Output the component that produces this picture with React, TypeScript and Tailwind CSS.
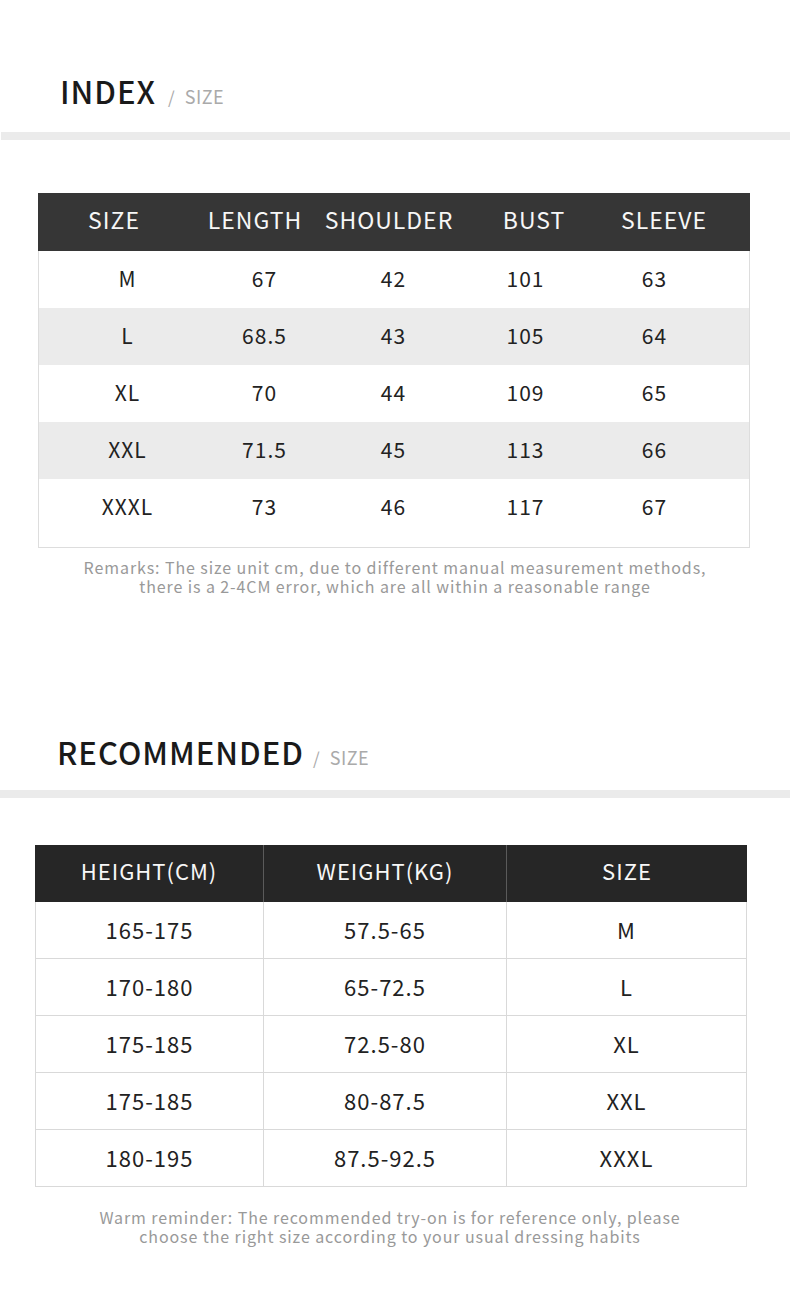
import React from 'react';

const FONT = "font-['Noto_Sans_CJK_SC','Noto_Sans',sans-serif]";

const indexRows = [
  ['M', '67', '42', '101', '63'],
  ['L', '68.5', '43', '105', '64'],
  ['XL', '70', '44', '109', '65'],
  ['XXL', '71.5', '45', '113', '66'],
  ['XXXL', '73', '46', '117', '67'],
];

const recRows = [
  ['165-175', '57.5-65', 'M'],
  ['170-180', '65-72.5', 'L'],
  ['175-185', '72.5-80', 'XL'],
  ['175-185', '80-87.5', 'XXL'],
  ['180-195', '87.5-92.5', 'XXXL'],
];

const SectionTitle: React.FC<{ title: string; className?: string; gap?: string }> = ({ title, className, gap }) => (
  <div className={`flex items-baseline ${className ?? ''}`}>
    <span className="text-[31px] leading-none font-medium tracking-[1px] text-[#1a1a1a]">{title}</span>
    <span className={`${gap ?? 'ml-[12px]'} text-[17px] leading-none text-[#aaaaaa]`}>/</span>
    <span className="ml-[10px] text-[18px] leading-none tracking-[0.5px] text-[#aaaaaa]">SIZE</span>
  </div>
);

const App: React.FC = () => {
  return (
    <div className={`w-[790px] min-h-[1304px] bg-white ${FONT}`}>
      {/* index section */}
      <div className="pt-[75px]">
        <SectionTitle title="INDEX" className="pl-[60px]" />
        <div className="mt-[26px] h-[8px] bg-[#ebebeb] ml-[1px]" />
      </div>

      <div className="ml-[38px] mt-[53px] w-[712px]">
        <div className="grid grid-cols-[152px_130px_138px_152px_108px_1fr] h-[58px] pb-[5px] items-center bg-[#363636] text-[#f7f7f7] text-[23px] tracking-[1px]">
          {['SIZE', 'LENGTH', 'SHOULDER', 'BUST', 'SLEEVE'].map((h) => (
            <div key={h} className="text-center whitespace-nowrap">{h}</div>
          ))}
          <div />
        </div>
        <div className="border-x border-b border-[#dddddd]">
          {indexRows.map((r, i) => (
            <div
              key={r[0]}
              className={`grid grid-cols-[178px_96px_162px_102px_156px_1fr] items-center text-[21px] tracking-[1px] text-[#222222] pb-[2px] ${
                i % 2 === 1 ? 'bg-[#ebebeb]' : 'bg-white'
              } ${i === indexRows.length - 1 ? 'h-[57px] mb-[11px]' : 'h-[57px]'}`}
            >
              {r.map((c, j) => (
                <div key={j} className="text-center -ml-px">{c}</div>
              ))}
              <div />
            </div>
          ))}
        </div>
      </div>

      <div className="mt-[10px] text-center text-[16px] leading-[19px] tracking-[0.9px] text-[#999999]">
        <div>Remarks: The size unit cm, due to different manual measurement methods,</div>
        <div>there is a 2-4CM error, which are all within a reasonable range</div>
      </div>

      {/* recommended section */}
      <div className="pt-[140px]">
        <SectionTitle title="RECOMMENDED" className="pl-[57px]" gap="ml-[9px]" />
        <div className="mt-[23px] h-[8px] bg-[#ebebeb]" />
      </div>

      <div className="ml-[35px] mt-[47px] w-[712px]">
        <div className="grid grid-cols-[229px_243px_1fr] h-[57px] pb-[6px] bg-[#262626] text-[#f7f7f7] text-[22px] tracking-[1px]">
          <div className="flex items-center justify-center border-r border-[#5a5a5a] -mb-[6px] pb-[6px]">HEIGHT(CM)</div>
          <div className="flex items-center justify-center border-r border-[#5a5a5a] -mb-[6px] pb-[6px]">WEIGHT(KG)</div>
          <div className="flex items-center justify-center">SIZE</div>
        </div>
        <div className="border-x border-[#d9d9d9]">
          {recRows.map((r, i) => (
            <div
              key={i}
              className="grid grid-cols-[228px_243px_1fr] h-[57px] pb-[2px] border-b border-[#d9d9d9] text-[22px] tracking-[1px] text-[#222222]"
            >
              <div className="flex items-center justify-center border-r border-[#d9d9d9] -mb-[2px] pb-[2px]">{r[0]}</div>
              <div className="flex items-center justify-center border-r border-[#d9d9d9] -mb-[2px] pb-[2px]">{r[1]}</div>
              <div className="flex items-center justify-center">{r[2]}</div>
            </div>
          ))}
        </div>
      </div>

      <div className="mt-[21px] text-center text-[16px] leading-[19px] tracking-[0.9px] text-[#999999] pr-[10px]">
        <div>Warm reminder: The recommended try-on is for reference only, please</div>
        <div>choose the right size according to your usual dressing habits</div>
      </div>
    </div>
  );
};

export default App;
